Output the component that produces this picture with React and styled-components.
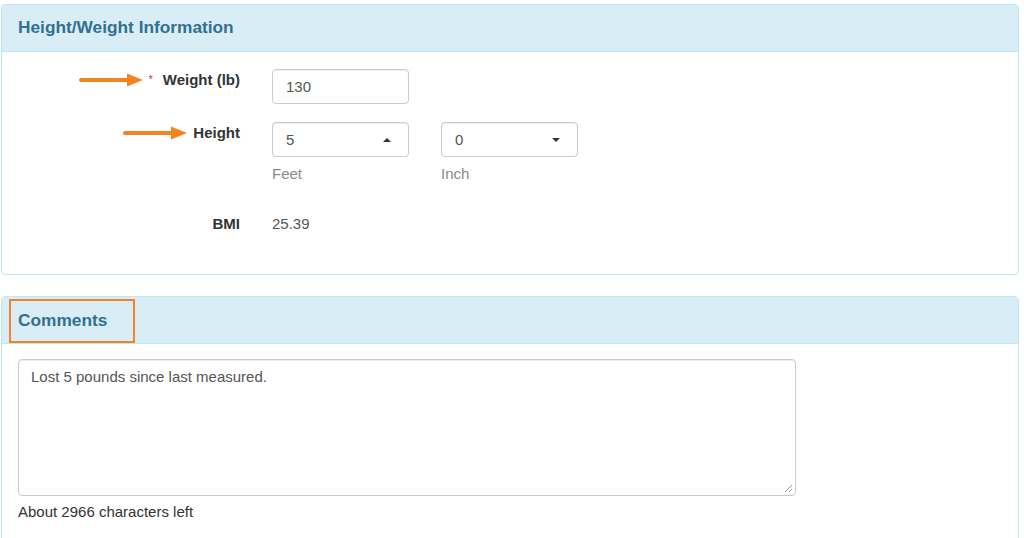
import React from "react";
import styled, { createGlobalStyle } from "styled-components";

const GlobalStyle = createGlobalStyle`
  body {
    margin: 0;
    background: #fff;
    font-family: "Liberation Sans", Arial, sans-serif;
    font-size: 15px;
    color: #333;
  }
`;

const Page = styled.div`
  padding: 4px 5px 0 1px;
  display: flex;
  flex-direction: column;
  gap: 21px;
  height: 534px;
  overflow: hidden;
`;

const Panel = styled.section`
  border: 1px solid #bce8f1;
  border-radius: 4px;
  background: #fff;
  flex-shrink: 0;
  min-height: ${(p) => p.$min || 0}px;
`;

const PanelHeading = styled.header`
  background: #d9edf7;
  border-bottom: 1px solid #bce8f1;
  border-radius: 3px 3px 0 0;
  height: 46px;
  display: flex;
  align-items: center;
  padding-left: ${(p) => (p.$boxed ? 7 : 16)}px;
`;

const Title = styled.h3`
  margin: 0;
  font-size: 17.3px;
  font-weight: bold;
  color: #31708f;
  padding: ${(p) => (p.$boxed ? "9px 26px 10px 7px" : "0")};
  border: ${(p) => (p.$boxed ? "2px solid #f0822a" : "none")};
  margin-top: ${(p) => (p.$boxed ? "1px" : "-1px")};
`;

const FormBody = styled.div`
  padding: 17px 0 40px;
  display: grid;
  grid-template-columns: 238px 169px 169px;
  row-gap: 18px;
  align-items: start;
`;

const Label = styled.div`
  grid-column: 1;
  text-align: right;
  font-weight: bold;
  padding-top: ${(p) => p.$top ?? 0}px;
  line-height: 20px;
`;

const LabelText = styled.span`
  position: relative;
`;

const Req = styled.span`
  color: #a94442;
  font-weight: normal;
  font-size: 11px;
  margin-right: 10px;
  vertical-align: 2px;
`;

const Arrow = styled.svg`
  position: absolute;
  right: calc(100% + 6px);
  top: 2px;
  width: 64px;
  height: 14px;
`;

const Field = styled.div`
  grid-column: ${(p) => p.$col};
  margin-left: 32px;
  display: flex;
  flex-direction: column;
`;

const Input = styled.div`
  box-sizing: border-box;
  width: 137px;
  height: 35px;
  border: 1px solid #ccc;
  border-radius: 4px;
  box-shadow: inset 0 1px 1px rgba(0, 0, 0, 0.075);
  padding: 0 13px;
  display: flex;
  align-items: center;
  justify-content: space-between;
  color: #555;
`;

const Caret = styled.span`
  width: 0;
  height: 0;
  border-left: 4px solid transparent;
  border-right: 4px solid transparent;
  ${(p) =>
    p.$up
      ? "border-bottom: 4px solid #333;"
      : "border-top: 4px solid #333;"}
  margin-right: 4px;
`;

const Help = styled.span`
  color: #8a8a8a;
  margin-top: 9px;
  line-height: 16px;
`;

const Value = styled.div`
  grid-column: 2;
  margin-left: 32px;
  padding-top: ${(p) => p.$top ?? 0}px;
  line-height: 20px;
  color: #555;
`;

const Row = styled.div`
  display: contents;
`;

const CommentBody = styled.div`
  padding: 15px 16px 40px;
`;

const TextArea = styled.div`
  box-sizing: border-box;
  width: 778px;
  height: 137px;
  border: 1px solid #ccc;
  border-radius: 4px;
  box-shadow: inset 0 1px 1px rgba(0, 0, 0, 0.075);
  padding: 8px 12px;
  color: #555;
  position: relative;
`;

const Grip = styled.svg`
  position: absolute;
  right: 2px;
  bottom: 2px;
  width: 9px;
  height: 9px;
`;

const Counter = styled.div`
  margin-top: 6px;
  line-height: 20px;
  color: #333;
`;

function OrangeArrow() {
  return (
    <Arrow viewBox="0 0 64 14">
      <line x1="2" y1="7" x2="50" y2="7" stroke="#f58220" strokeWidth="4" strokeLinecap="round" />
      <polygon points="48,0.5 64,7 48,13.5" fill="#f58220" />
    </Arrow>
  );
}

export default function App() {
  return (
    <>
      <GlobalStyle />
      <Page>
        <Panel>
          <PanelHeading>
            <Title>Height/Weight Information</Title>
          </PanelHeading>
          <FormBody>
            <Row>
              <Label $top={0}>
                <LabelText>
                  <OrangeArrow />
                  <Req>*</Req>Weight (lb)
                </LabelText>
              </Label>
              <Field $col={2}>
                <Input>130</Input>
              </Field>
            </Row>
            <Row>
              <Label $top={1}>
                <LabelText>
                  <OrangeArrow />
                  Height
                </LabelText>
              </Label>
              <Field $col={2}>
                <Input>
                  5<Caret $up />
                </Input>
                <Help>Feet</Help>
              </Field>
              <Field $col={3}>
                <Input>
                  0<Caret />
                </Input>
                <Help>Inch</Help>
              </Field>
            </Row>
            <Row>
              <Label $top={14}>BMI</Label>
              <Value $top={14}>25.39</Value>
            </Row>
          </FormBody>
        </Panel>
        <Panel $min={260}>
          <PanelHeading $boxed>
            <Title $boxed>Comments</Title>
          </PanelHeading>
          <CommentBody>
            <TextArea>
              Lost 5 pounds since last measured.
              <Grip viewBox="0 0 9 9">
                <line x1="1" y1="8" x2="8" y2="1" stroke="#999" strokeWidth="1" />
                <line x1="5" y1="8" x2="8" y2="5" stroke="#999" strokeWidth="1" />
              </Grip>
            </TextArea>
            <Counter>About 2966 characters left</Counter>
          </CommentBody>
        </Panel>
      </Page>
    </>
  );
}
